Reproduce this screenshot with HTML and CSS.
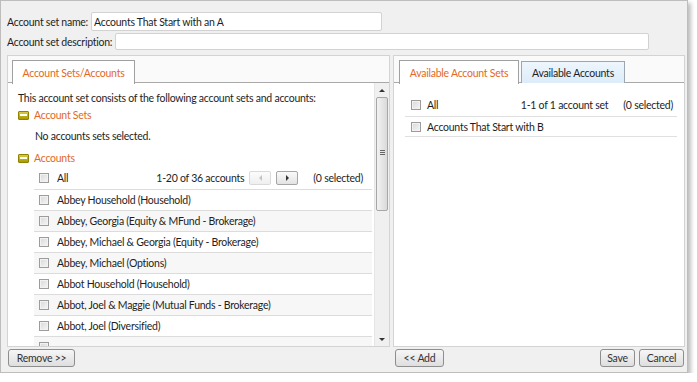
FILE: index.html
```html
<!DOCTYPE html>
<html lang="en">
<head>
  <meta charset="UTF-8">
  <title>Account Set</title>
  <link rel="stylesheet" href="styles.css">
</head>
<body>
  <div class="dialog">
    <!-- Nombre y descripción del conjunto -->
    <div class="field field-name">
      <label for="set-name">Account set name:</label>
      <input type="text" id="set-name" class="name-input" value="Accounts That Start with an A">
    </div>
    <div class="field field-desc">
      <label for="set-desc">Account set description:</label>
      <input type="text" id="set-desc" class="desc-input">
    </div>

    <div class="panels">
      <!-- Panel izquierdo: miembros del conjunto -->
      <div class="panel">
        <div class="tab-strip">
          <div class="tab active">Account Sets/Accounts</div>
        </div>
        <div class="panel-body">
          <div class="scroll-content">
            <p class="intro">This account set consists of the following account sets and accounts:</p>
            <div class="group-header"><span class="collapse-icon"></span>Account Sets</div>
            <p class="empty-note">No accounts sets selected.</p>
            <div class="group-header accounts-header"><span class="collapse-icon"></span>Accounts</div>
            <div class="list">
              <div class="list-row all-row">
                <span class="check"></span>
                <span class="row-label">All</span>
                <span class="count">1-20 of 36 accounts</span>
                <span class="pager">
                  <span class="page-btn disabled"><span class="arrow-left"></span></span>
                  <span class="page-btn"><span class="arrow-right"></span></span>
                </span>
                <span class="selected">(0 selected)</span>
              </div>
              <div class="list-row"><span class="check"></span><span class="row-label">Abbey Household (Household)</span></div>
              <div class="list-row"><span class="check"></span><span class="row-label">Abbey, Georgia (Equity &amp; MFund - Brokerage)</span></div>
              <div class="list-row"><span class="check"></span><span class="row-label">Abbey, Michael &amp; Georgia (Equity - Brokerage)</span></div>
              <div class="list-row"><span class="check"></span><span class="row-label">Abbey, Michael (Options)</span></div>
              <div class="list-row"><span class="check"></span><span class="row-label">Abbot Household (Household)</span></div>
              <div class="list-row"><span class="check"></span><span class="row-label">Abbot, Joel &amp; Maggie (Mutual Funds - Brokerage)</span></div>
              <div class="list-row"><span class="check"></span><span class="row-label">Abbot, Joel (Diversified)</span></div>
              <div class="list-row"><span class="check"></span></div>
            </div>
          </div>
          <div class="scrollbar">
            <span class="sb-up"></span>
            <span class="sb-thumb"><span class="grip"></span></span>
            <span class="sb-down"></span>
          </div>
        </div>
      </div>

      <!-- Panel derecho: disponibles -->
      <div class="panel">
        <div class="tab-strip right-strip">
          <div class="tab active">Available Account Sets</div>
          <div class="tab inactive">Available Accounts</div>
        </div>
        <div class="panel-body">
          <div class="list right-list">
            <div class="list-row all-row">
              <span class="check"></span>
              <span class="row-label">All</span>
              <span class="count">1-1 of 1 account set</span>
              <span class="selected">(0 selected)</span>
            </div>
            <div class="list-row"><span class="check"></span><span class="row-label">Accounts That Start with B</span></div>
          </div>
        </div>
      </div>
    </div>

    <div class="actions">
      <div class="actions-left">
        <button class="btn btn-remove">Remove &gt;&gt;</button>
      </div>
      <div class="actions-right">
        <button class="btn btn-add">&lt;&lt; Add</button>
        <button class="btn btn-save">Save</button>
        <button class="btn btn-cancel">Cancel</button>
      </div>
    </div>
  </div>
</body>
</html>
```

FILE: styles.css
```css
/* General */
body {
  margin: 0;
  background: #ffffff;
  font-family: 'Lato', 'Liberation Sans', sans-serif;
  font-size: 10.5px;
  letter-spacing: -0.25px;
  color: #1e1e1e;
}
p {
  margin: 0;
}
/* Marco del diálogo */
.dialog {
  box-sizing: border-box;
  width: 688px;
  height: 373px;
  padding: 11px 2px 0 6px;
  background: #f0f0f0;
  border: 1px solid #bdbdbd;
  box-shadow: 3px 3px 4px rgba(0, 0, 0, 0.25);
}
.field {
  display: flex;
  align-items: center;
}
.field label {
  margin-right: 3px;
  white-space: nowrap;
}
.field input {
  box-sizing: border-box;
  border: 1px solid #d2d2d2;
  border-radius: 2px;
  background: #fff;
  font-family: inherit;
  font-size: 10.5px;
  letter-spacing: -0.25px;
  color: #1e1e1e;
  padding: 0 2px;
  outline: none;
}
.name-input {
  width: 291px;
  height: 19px;
}
.field-desc {
  margin-top: 2px;
}
.desc-input {
  width: 534px;
  height: 17px;
}
/* Paneles */
.panels {
  display: grid;
  grid-template-columns: 383px 292px;
  gap: 3px;
  margin-top: 5px;
}
.panel {
  box-sizing: border-box;
  height: 292px;
  border: 1px solid #d3d3d3;
  background: #fff;
  display: flex;
  flex-direction: column;
}
.tab-strip {
  display: flex;
  gap: 2px;
  height: 27px;
  padding: 4px 0 0 4px;
  box-sizing: border-box;
  border-bottom: 1px solid #a9a9a9;
  background: #fafafa;
}
.right-strip {
  padding-left: 5px;
}
.tab {
  box-sizing: border-box;
  height: 24px;
  margin-bottom: -1px;
  border: 1px solid #a0a0a0;
  border-bottom: none;
  display: flex;
  align-items: center;
  justify-content: center;
}
.tab.active {
  background: #fff;
  color: #e2691f;
}
.panel:first-child .tab.active {
  width: 123px;
}
.right-strip .tab.active {
  width: 120px;
}
.tab.inactive {
  width: 104px;
  height: 22px;
  margin-top: 1px;
  margin-bottom: 0;
  background: linear-gradient(#eef6fd, #dcecf9);
  border-color: #9aa6b2;
  color: #1e1e1e;
}
.panel-body {
  flex: 1;
  display: flex;
  min-height: 0;
}
.scroll-content {
  flex: 1;
  overflow: hidden;
  padding: 8px 2px 0 10px;
}
.intro {
  line-height: 14px;
}
.group-header {
  display: flex;
  align-items: center;
  line-height: 14px;
  margin-top: 3px;
  color: #e2691f;
}
.accounts-header {
  margin-top: 8px;
}
.collapse-icon {
  position: relative;
  box-sizing: border-box;
  width: 11px;
  height: 9px;
  margin-right: 5px;
  border: 1px solid #8f8200;
  border-radius: 1px;
  background: linear-gradient(#d9cb3a, #a99a00);
}
.collapse-icon::after {
  content: '';
  position: absolute;
  left: 1px;
  right: 1px;
  top: 2px;
  height: 2px;
  background: #fff;
}
.empty-note {
  line-height: 14px;
  margin: 7px 0 0 17px;
}
/* Listas con casillas */
.list {
  margin: 1px 0 0 16px;
}
.list-row {
  display: flex;
  align-items: center;
  height: 20px;
  padding: 0 9px 0 5px;
  border-bottom: 1px solid #dcdcdc;
  white-space: nowrap;
}
.list-row:nth-child(odd) {
  background: #f7f7f7;
}
.list-row.all-row {
  height: 23px;
  background: #fff;
}
.check {
  box-sizing: border-box;
  flex: none;
  width: 10px;
  height: 10px;
  margin-right: 8px;
  border: 1px solid #9c9c9c;
  background: linear-gradient(135deg, #d8d8d8, #f6f6f6);
  box-shadow: inset 0 0 0 1px #f2f2f2;
}
.row-label {
  flex: 1;
}
.pager {
  display: flex;
  gap: 5px;
  margin-left: 5px;
}
.page-btn {
  box-sizing: border-box;
  width: 22px;
  height: 14px;
  border: 1px solid #a5a5a5;
  border-radius: 2px;
  background: linear-gradient(#fafafa, #e3e3e3);
  display: flex;
  align-items: center;
  justify-content: center;
}
.page-btn.disabled {
  border-color: #dadada;
  background: linear-gradient(#fcfcfc, #efefef);
}
.arrow-left {
  border-top: 3px solid transparent;
  border-bottom: 3px solid transparent;
  border-right: 3px solid #c4c4c4;
}
.arrow-right {
  border-top: 3px solid transparent;
  border-bottom: 3px solid transparent;
  border-left: 3px solid #333;
}
.selected {
  margin-left: 15px;
}
/* Barra de desplazamiento */
.scrollbar {
  position: relative;
  width: 14px;
  background: #f0f0f0;
  border-left: 1px solid #e6e6e6;
}
.sb-up,
.sb-down {
  position: absolute;
  left: 4px;
  border-left: 3px solid transparent;
  border-right: 3px solid transparent;
}
.sb-up {
  top: 6px;
  border-bottom: 3px solid #333;
}
.sb-down {
  bottom: 5px;
  border-top: 3px solid #333;
}
.sb-thumb {
  position: absolute;
  box-sizing: border-box;
  left: 1px;
  top: 14px;
  width: 12px;
  height: 114px;
  border: 1px solid #a6a6a6;
  border-radius: 2px;
  background: linear-gradient(to right, #f2f2f2, #dadada);
}
.grip {
  position: absolute;
  left: 3px;
  top: 52px;
  width: 5px;
  height: 5px;
  background: repeating-linear-gradient(#666 0 1px, transparent 1px 2px);
}
/* Lista derecha */
.right-list {
  flex: 1;
  margin: 11px 7px 0 11px;
}
.right-list .list-row {
  height: 19px;
  padding: 0 4px 0 6px;
  background: #fff;
  border-bottom-color: #e0e0e0;
}
.right-list .list-row.all-row {
  height: 22px;
}
.right-list .check {
  margin-right: 6px;
}
/* Botones inferiores */
.actions {
  display: grid;
  grid-template-columns: 383px 292px;
  gap: 3px;
  margin-top: 2px;
}
.actions-left {
  padding-left: 1px;
}
.actions-right {
  display: flex;
  gap: 4px;
  padding: 0 1px 0 2px;
}
.btn {
  box-sizing: border-box;
  height: 18px;
  padding: 0;
  border: 1px solid #8e8e8e;
  border-radius: 3px;
  background: linear-gradient(#f6f6f6, #dedede);
  font-family: inherit;
  font-size: 10.5px;
  letter-spacing: -0.25px;
  color: #333;
}
.btn-remove {
  width: 67px;
}
.btn-add {
  width: 49px;
}
.btn-save {
  margin-left: auto;
  width: 35px;
}
.btn-cancel {
  width: 45px;
}
```
